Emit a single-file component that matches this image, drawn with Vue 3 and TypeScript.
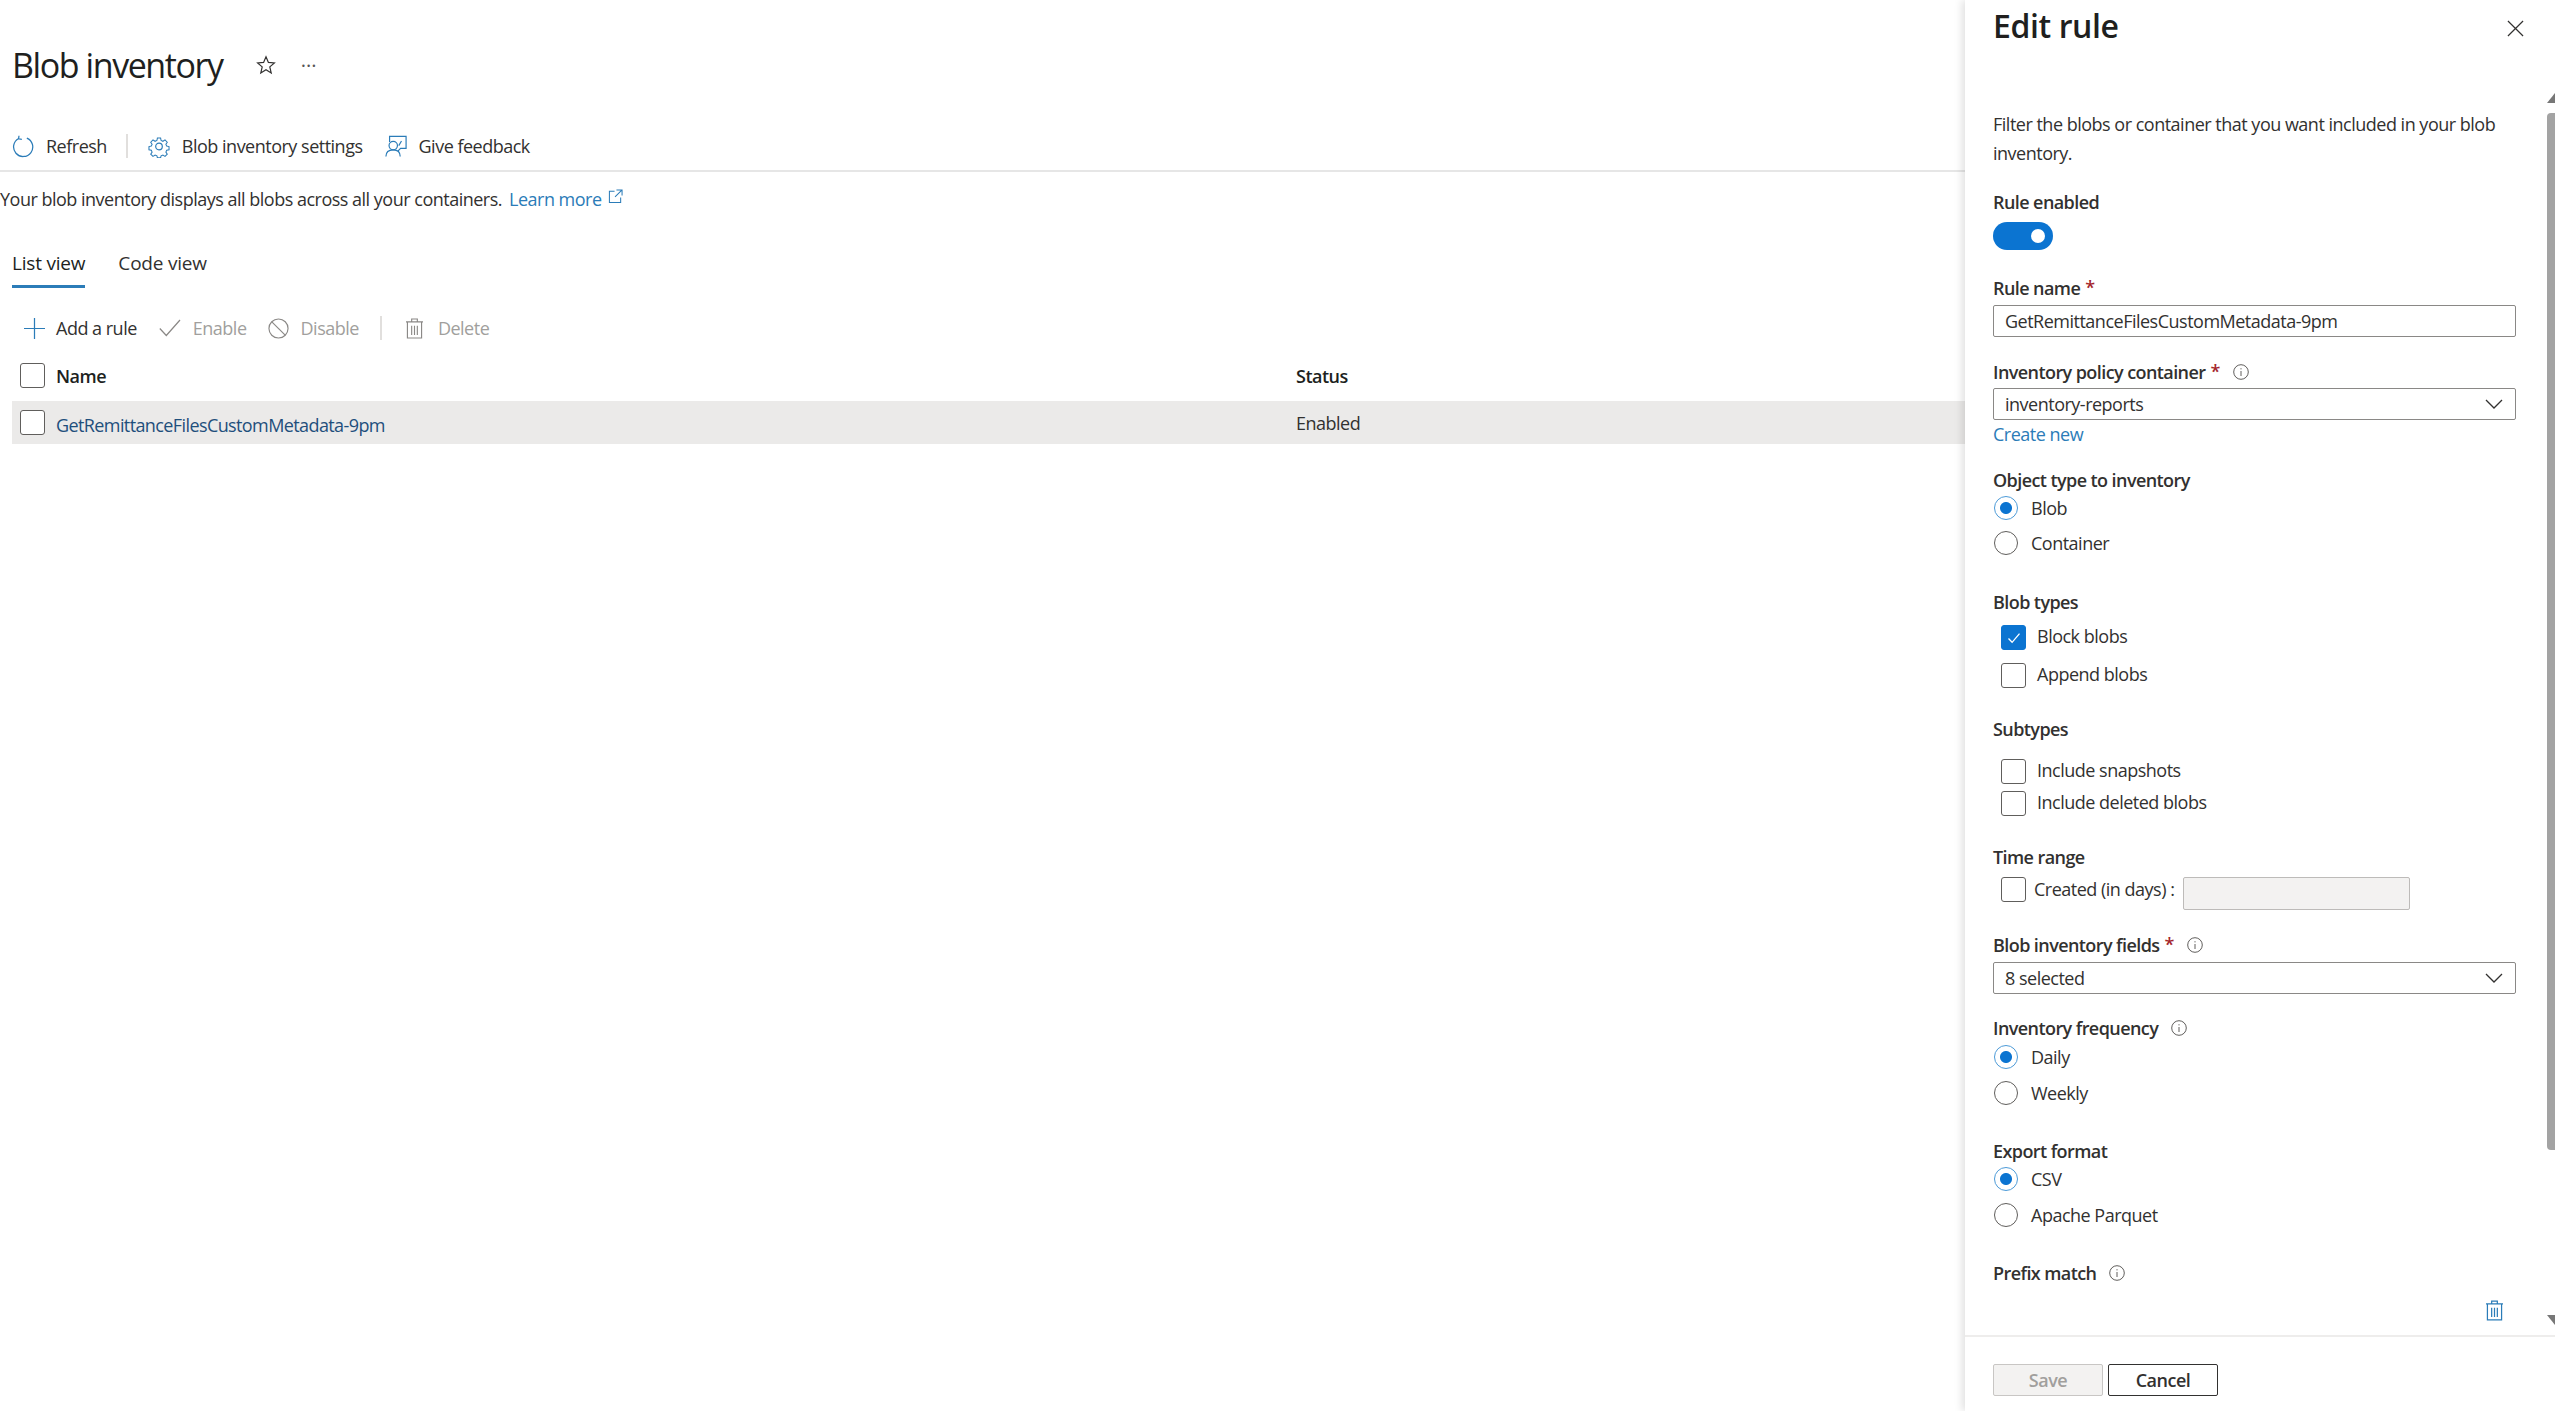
<template>
  <div class="page">
    <main class="blade">
      <header class="title-row">
        <h1 class="page-title">Blob inventory</h1>
        <svg class="star" viewBox="0 0 20 20"><path d="M10 1.8l2.4 5.6 6 .5-4.6 4 1.4 6-5.2-3.2-5.2 3.2 1.4-6-4.6-4 6-.5z" /></svg>
        <span class="more">···</span>
      </header>

      <nav class="toolbar">
        <button class="tool tool-refresh">
          <svg class="ico" viewBox="0 0 22 24"><path d="M6.5 3.6A10 10 0 1 0 15 3.2M6.8 .8l-.4 3.2 3.4.6" /></svg>
          <span>Refresh</span>
        </button>
        <i class="tool-sep"></i>
        <button class="tool tool-settings">
          <svg class="ico" viewBox="0 0 24 24">
            <path d="M10 1.5h4l.6 3 2.3 1 2.6-1.7 2.8 2.9-1.7 2.5 1 2.3 2.9.6v4l-2.9.6-1 2.3 1.7 2.5-2.8 2.9-2.6-1.7-2.3 1-.6 2.3h-4l-.6-2.3-2.3-1-2.6 1.7-2.8-2.9 1.7-2.5-1-2.3-2.9-.6v-4l2.9-.6 1-2.3-1.7-2.5 2.8-2.9 2.6 1.7 2.3-1z" transform="translate(1.5 1.5) scale(.875)" />
            <circle cx="12" cy="12" r="3.6" />
          </svg>
          <span>Blob inventory settings</span>
        </button>
        <button class="tool tool-feedback">
          <svg class="ico" viewBox="0 0 24 24">
            <path d="M5 7V1h18v13h-6l-3 3M18 6l-3 5" />
            <circle cx="9" cy="11" r="4.6" />
            <path d="M1 23c0-5 3.4-7.4 8-7.4s7.6 2.4 7.6 7.4" />
          </svg>
          <span>Give feedback</span>
        </button>
      </nav>

      <p class="intro">
        Your blob inventory displays all blobs across all your containers.
        <a class="learn">Learn more</a>
        <svg class="ext" viewBox="0 0 16 16"><path d="M7 2.5H1.5v12h12V9M9 1h6v6M15 1L7.5 8.5" /></svg>
      </p>

      <div class="tabs">
        <span class="tab tab-active">List view</span>
        <span class="tab">Code view</span>
      </div>

      <div class="commands">
        <button class="cmd cmd-add">
          <svg class="ico-plus" viewBox="0 0 22 22"><path d="M11 0v22M0 11h22" /></svg>
          <span>Add a rule</span>
        </button>
        <button class="cmd cmd-off cmd-enable">
          <svg class="ico-check" viewBox="0 0 22 18"><path d="M.8 9.5l6.5 7L21 1" /></svg>
          <span>Enable</span>
        </button>
        <button class="cmd cmd-off cmd-disable">
          <svg class="ico-ban" viewBox="0 0 22 22"><circle cx="11" cy="11" r="10" /><path d="M4 4l14 14" /></svg>
          <span>Disable</span>
        </button>
        <i class="cmd-sep"></i>
        <button class="cmd cmd-off cmd-delete">
          <svg class="ico-trash" viewBox="0 0 18 22"><path d="M1.5 4h15v17h-15zM0 4h18M6 4V1h6v3M6 8v10M9 8v10M12 8v10" /></svg>
          <span>Delete</span>
        </button>
      </div>

      <div class="grid-row grid-head">
        <span class="box"></span>
        <span class="col-name">Name</span>
        <span class="col-status">Status</span>
      </div>
      <div v-for="rule in rules" :key="rule.name" class="grid-row grid-item">
        <span class="box"></span>
        <a class="col-name rule-link">{{ rule.name }}</a>
        <span class="col-status">{{ rule.status }}</span>
      </div>
    </main>

    <aside class="panel">
      <header class="panel-head">
        <h2 class="panel-title">Edit rule</h2>
        <svg class="close" viewBox="0 0 18 18"><path d="M1 1l16 16M17 1L1 17" /></svg>
      </header>

      <div class="panel-body">
        <form class="form">
          <p class="desc">Filter the blobs or container that you want included in your blob inventory.</p>

          <div class="label mt-22">Rule enabled</div>
          <div class="toggle mt-8"><i class="knob"></i></div>

          <div class="label mt-26">Rule name<em class="req">*</em></div>
          <div class="field mt-5">{{ ruleName }}</div>

          <div class="label mt-23">Inventory policy container<em class="req">*</em>
            <svg class="info" viewBox="0 0 16 16"><circle cx="8" cy="8" r="7.3" /><path d="M8 7v5M8 4.2v1.2" /></svg>
          </div>
          <div class="field select mt-4">
            <span>inventory-reports</span>
            <svg class="chev" viewBox="0 0 18 10"><path d="M1 1l8 8 8-8" /></svg>
          </div>
          <a class="create mt-2">Create new</a>

          <div class="label mt-22">Object type to inventory</div>
          <label class="opt mt-4"><i class="radio on"></i>Blob</label>
          <label class="opt mt-11"><i class="radio"></i>Container</label>

          <div class="label mt-35">Blob types</div>
          <label class="chk mt-11"><i class="box box-on"><svg viewBox="0 0 16 16"><path d="M2.5 8.5l3.6 3.8 7.4-8.6" /></svg></i>Block blobs</label>
          <label class="chk mt-13"><i class="box"></i>Append blobs</label>

          <div class="label mt-29">Subtypes</div>
          <label class="chk mt-18"><i class="box"></i>Include snapshots</label>
          <label class="chk mt-7"><i class="box"></i>Include deleted blobs</label>

          <div class="label mt-29">Time range</div>
          <div class="time mt-8">
            <i class="box"></i>
            <span class="time-label">Created (in days) :</span>
            <div class="time-input"></div>
          </div>

          <div class="label mt-23">Blob inventory fields<em class="req">*</em>
            <svg class="info" viewBox="0 0 16 16"><circle cx="8" cy="8" r="7.3" /><path d="M8 7v5M8 4.2v1.2" /></svg>
          </div>
          <div class="field select mt-5">
            <span>8 selected</span>
            <svg class="chev" viewBox="0 0 18 10"><path d="M1 1l8 8 8-8" /></svg>
          </div>

          <div class="label mt-22">Inventory frequency
            <svg class="info" viewBox="0 0 16 16"><circle cx="8" cy="8" r="7.3" /><path d="M8 7v5M8 4.2v1.2" /></svg>
          </div>
          <label class="opt mt-5"><i class="radio on"></i>Daily</label>
          <label class="opt mt-12"><i class="radio"></i>Weekly</label>

          <div class="label mt-34">Export format</div>
          <label class="opt mt-4"><i class="radio on"></i>CSV</label>
          <label class="opt mt-12"><i class="radio"></i>Apache Parquet</label>

          <div class="label mt-34">Prefix match
            <svg class="info" viewBox="0 0 16 16"><circle cx="8" cy="8" r="7.3" /><path d="M8 7v5M8 4.2v1.2" /></svg>
          </div>
          <div class="prefix-row">
            <svg class="prefix-trash" viewBox="0 0 18 22"><path d="M1.5 4h15v17h-15zM0 4h18M6 4V1h6v3M6 8v10M9 8v10M12 8v10" /></svg>
          </div>
        </form>

        <div class="scrollbar">
          <i class="arrow-up"></i>
          <i class="thumb"></i>
          <i class="arrow-down"></i>
        </div>
      </div>

      <footer class="panel-foot">
        <button class="btn btn-save" disabled>Save</button>
        <button class="btn btn-cancel">Cancel</button>
      </footer>
    </aside>
  </div>
</template>

<script setup lang="ts">
type Rule = { name: string; status: string }

const ruleName = 'GetRemittanceFilesCustomMetadata-9pm'
const rules: Rule[] = [{ name: ruleName, status: 'Enabled' }]
</script>

<style>
html, body { margin: 0; background: #fff; }
</style>

<style scoped>
.page {
  display: flex;
  width: 2555px;
  height: 1411px;
  overflow: hidden;
  background: #fff;
  color: #323130;
  font-family: "Open Sans", "Noto Sans", "Liberation Sans", sans-serif;
  font-size: 18px;
  letter-spacing: -.5px;
}

/* left blade */
.blade { flex: 1; min-width: 0; }

.title-row {
  display: flex;
  align-items: center;
  height: 54px;
  padding: 38px 0 0 12px;
}
.page-title { margin: 0; font-size: 34px; font-weight: 400; color: #201f1e; line-height: 54px; letter-spacing: -1.42px; }
.star { width: 20px; height: 20px; margin-left: 33px; fill: none; stroke: #323130; stroke-width: 1.2; }
.more { margin-left: 25px; font-size: 20px; color: #555; letter-spacing: 0; }

.toolbar {
  display: flex;
  align-items: center;
  height: 28px;
  margin-top: 40px;
  padding-left: 12px;
  padding-bottom: 10px;
  border-bottom: 2px solid #e6e6e6;
}
.tool, .cmd {
  display: flex;
  align-items: center;
  padding: 0;
  border: 0;
  background: none;
  color: inherit;
  font: inherit;
  letter-spacing: inherit;
}
.ico { width: 22px; height: 23px; margin-right: 12px; fill: none; stroke: #2b7cb8; stroke-width: 1.3; }
.tool-sep { width: 2px; height: 24px; margin: 0 20px 0 19px; background: #e1dfdd; }
.tool-feedback { margin-left: 22px; }

.intro { margin: 13px 0 0; height: 28px; line-height: 28px; display: flex; align-items: center; }
.learn { margin-left: 7px; color: #2b7cb8; }
.ext { width: 15px; height: 15px; margin: -5px 0 0 6px; fill: none; stroke: #2b7cb8; stroke-width: 1.1; }

.tabs { display: flex; margin: 36px 0 0 12px; gap: 33px; font-size: 19px; letter-spacing: -.2px; }
.tab { height: 36px; line-height: 28px; border-bottom: 3px solid transparent; }
.tab-active { border-bottom-color: #2b7cb8; color: #201f1e; }

.commands { display: flex; align-items: center; height: 24px; margin: 28px 0 0 24px; color: #323130; }
.cmd-off { color: #a19f9d; }
.ico-plus { width: 21px; height: 21px; margin-right: 11px; fill: none; stroke: #2b7cb8; stroke-width: 1.3; }
.ico-check { width: 22px; height: 18px; margin-right: 12px; fill: none; stroke: #8a8886; stroke-width: 1.2; }
.ico-ban { width: 21px; height: 21px; margin-right: 12px; fill: none; stroke: #8a8886; stroke-width: 1.2; }
.ico-trash { width: 17px; height: 21px; margin-right: 15px; fill: none; stroke: #8a8886; stroke-width: 1.2; }
.cmd-enable { margin-left: 22px; }
.cmd-disable { margin-left: 21px; }
.cmd-sep { width: 2px; height: 24px; margin: 0 24px 0 21px; background: #e1dfdd; }

.grid-row { display: flex; align-items: center; margin-left: 12px; padding-left: 8px; }
.grid-head { height: 33px; margin-top: 19px; font-weight: 600; color: #201f1e; }
.grid-item { height: 43px; margin-top: 9px; background: #ebeae9; }
.col-name { margin-left: 11px; width: 1240px; }
.rule-link { padding-top: 5px; color: #1f4f7c; letter-spacing: -.6px; }
.box {
  display: flex;
  flex: none;
  align-items: center;
  justify-content: center;
  box-sizing: border-box;
  width: 25px;
  height: 25px;
  background: #fff;
  border: 1px solid #605e5c;
  border-radius: 3px;
}

/* right panel */
.panel {
  display: flex;
  flex: none;
  flex-direction: column;
  width: 590px;
  background: #fff;
  box-shadow: -3px 0 8px rgba(0, 0, 0, .12);
  z-index: 1;
}
.panel-head {
  display: flex;
  align-items: center;
  justify-content: space-between;
  height: 54px;
  padding: 0 31px 0 28px;
}
.panel-title { margin: -3px 0 0; font-size: 32px; font-weight: 600; color: #201f1e; letter-spacing: -.4px; }
.close { width: 17px; height: 17px; margin-top: 2px; fill: none; stroke: #323130; stroke-width: 1.3; }

.panel-body { display: flex; flex: 1; min-height: 0; overflow: hidden; }
.form { flex: 1; min-width: 0; padding: 56px 31px 0 28px; }
.desc { margin: 0; line-height: 29px; color: #323130; }

.label {
  display: flex;
  align-items: center;
  height: 24px;
  line-height: 24px;
  font-weight: 600;
  color: #323130;
  letter-spacing: -.58px;
}
.req { margin-left: 5px; margin-top: -3px; font-style: normal; color: #a4262c; }
.info { width: 16px; height: 16px; margin-left: 13px; fill: none; stroke: #605e5c; stroke-width: 1; }

.toggle {
  position: relative;
  width: 60px;
  height: 28px;
  border-radius: 14px;
  background: #0b74d1;
}
.knob {
  position: absolute;
  top: 7px;
  right: 8px;
  width: 14px;
  height: 14px;
  border-radius: 50%;
  background: #fff;
}

.field {
  display: flex;
  align-items: center;
  box-sizing: border-box;
  height: 32px;
  padding: 0 12px 0 11px;
  border: 1px solid #8a8886;
  border-radius: 2px;
}
.select { justify-content: space-between; }
.chev { width: 18px; height: 10px; fill: none; stroke: #323130; stroke-width: 1.3; }
.create { display: block; height: 24px; line-height: 24px; color: #2b7cb8; }

.opt { display: flex; align-items: flex-start; height: 24px; padding-left: 1px; line-height: 25px; }
.radio {
  flex: none;
  box-sizing: border-box;
  width: 24px;
  height: 24px;
  margin-right: 13px;
  border: 1px solid #605e5c;
  border-radius: 50%;
  background: #fff;
}
.radio.on {
  border-color: #4d9bd8;
  background: radial-gradient(circle, #0b74d1 0 5.5px, #fff 6.5px);
}

.chk { display: flex; align-items: flex-start; height: 25px; padding-left: 8px; line-height: 23px; }
.chk .box { margin-right: 11px; }
.box-on { background: #0b74d1; border-color: #0b74d1; }
.box-on svg { width: 16px; height: 16px; fill: none; stroke: #fff; stroke-width: 1.3; }

.time { display: flex; height: 33px; padding-left: 8px; }
.time-label { height: 25px; line-height: 25px; margin-left: 8px; }
.time-input {
  box-sizing: border-box;
  width: 227px;
  height: 33px;
  margin-left: 9px;
  background: #f3f2f1;
  border: 1px solid #bdbbb9;
  border-radius: 2px;
}

.prefix-row { display: flex; justify-content: flex-end; margin-top: 15px; padding-right: 13px; }
.prefix-trash { width: 17px; height: 21px; fill: none; stroke: #2b7cb8; stroke-width: 1.3; }

.scrollbar { display: flex; flex: none; flex-direction: column; width: 8px; padding-top: 39px; }
.arrow-up { width: 8px; height: 10px; background: #777; clip-path: polygon(100% 0, 100% 100%, 0 100%); }
.thumb { width: 8px; height: 1037px; margin-top: 10px; border-radius: 4px 0 0 4px; background: #a3a3a3; }
.arrow-down { width: 8px; height: 10px; margin-top: 165px; background: #777; clip-path: polygon(0 0, 100% 0, 100% 100%); }

.panel-foot {
  display: flex;
  flex: none;
  gap: 5px;
  height: 76px;
  box-sizing: border-box;
  padding: 27px 0 0 28px;
  border-top: 2px solid #eeedec;
}
.btn {
  box-sizing: border-box;
  width: 110px;
  height: 32px;
  border-radius: 2px;
  font: inherit;
  font-weight: 600;
  letter-spacing: inherit;
}
.btn-save { background: #f3f2f1; border: 1px solid #c8c6c4; color: #a19f9d; }
.btn-cancel { background: #fff; border: 1px solid #323130; color: #323130; }

.mt-2 { margin-top: 2px; }
.mt-4 { margin-top: 4px; }
.mt-5 { margin-top: 5px; }
.mt-7 { margin-top: 7px; }
.mt-8 { margin-top: 8px; }
.mt-11 { margin-top: 11px; }
.mt-12 { margin-top: 12px; }
.mt-13 { margin-top: 13px; }
.mt-18 { margin-top: 18px; }
.mt-22 { margin-top: 22px; }
.mt-23 { margin-top: 23px; }
.mt-26 { margin-top: 26px; }
.mt-29 { margin-top: 29px; }
.mt-34 { margin-top: 34px; }
.mt-35 { margin-top: 35px; }
</style>
